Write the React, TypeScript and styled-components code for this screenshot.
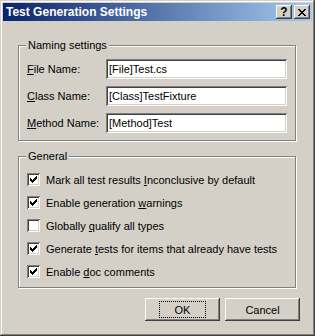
import React from "react";
import styled, { createGlobalStyle } from "styled-components";

const GlobalStyle = createGlobalStyle`
  html, body {
    margin: 0;
    padding: 0;
    background: #d4d0c8;
  }
  body {
    font-family: "Liberation Sans", Arial, sans-serif;
    font-size: 11px;
    color: #000;
  }
`;

const Window = styled.div`
  width: 315px;
  height: 336px;
  box-sizing: border-box;
  padding: 3px;
  background: #d4d0c8;
  box-shadow: inset -1px -1px #404040, inset 1px 1px #d4d0c8,
    inset -2px -2px #808080, inset 2px 2px #fff;
  display: flex;
  flex-direction: column;
`;

const TitleBar = styled.div`
  height: 18px;
  display: flex;
  align-items: center;
  padding: 0 2px;
  background: linear-gradient(to right, #0a246a, #a6caf0);
`;

const Title = styled.span`
  flex: 1;
  color: #fff;
  font-weight: bold;
  font-size: 12px;
  padding-left: 1px;
  white-space: nowrap;
`;

const CaptionButton = styled.div<{ $gap?: number }>`
  width: 16px;
  height: 14px;
  margin-left: ${(p) => p.$gap ?? 0}px;
  box-sizing: border-box;
  background: #d4d0c8;
  box-shadow: inset -1px -1px #404040, inset 1px 1px #fff,
    inset -2px -2px #808080;
  display: flex;
  align-items: center;
  justify-content: center;
  font-weight: bold;
  font-size: 12px;
  line-height: 14px;
`;

const Body = styled.div`
  flex: 1;
  display: flex;
  flex-direction: column;
  padding: 24px 12px 0 15px;
`;

const Group = styled.div<{ $top: number }>`
  position: relative;
  margin-top: ${(p) => p.$top}px;
  margin-right: 4px;
  border: 1px solid #808080;
  box-shadow: 1px 1px 0 #fff, inset 1px 1px 0 #fff;
`;

const Legend = styled.span`
  position: absolute;
  top: -7px;
  left: 7px;
  padding: 0 2px;
  line-height: 13px;
  background: #d4d0c8;
`;

const FieldGrid = styled.div`
  display: grid;
  grid-template-columns: 79px 1fr;
  row-gap: 7px;
  align-items: center;
  padding: 13px 8px 7px 8px;
`;

const Label = styled.label`
  white-space: nowrap;
`;

const TextBox = styled.input`
  height: 20px;
  box-sizing: border-box;
  border: none;
  outline: none;
  margin: 0;
  padding: 0 2px 0 3px;
  background: #fff;
  font-family: "Liberation Sans", Arial, sans-serif;
  font-size: 11px;
  color: #000;
  box-shadow: inset 1px 1px #808080, inset -1px -1px #fff,
    inset 2px 2px #404040, inset -2px -2px #d4d0c8;
`;

const CheckList = styled.div`
  display: flex;
  flex-direction: column;
  padding: 11px 8px 4px 8px;
`;

const CheckRow = styled.label`
  height: 23px;
  display: flex;
  align-items: center;
  gap: 6px;
  white-space: nowrap;
`;

const Box = styled.span`
  width: 13px;
  height: 13px;
  box-sizing: border-box;
  flex: none;
  background: #fff;
  box-shadow: inset 1px 1px #808080, inset -1px -1px #fff,
    inset 2px 2px #404040, inset -2px -2px #d4d0c8;
  display: flex;
  padding: 3px;
`;

const ButtonRow = styled.div`
  display: flex;
  justify-content: flex-end;
  gap: 5px;
  margin-top: 10px;
`;

const Button = styled.button`
  width: 75px;
  height: 23px;
  border: none;
  margin: 0;
  padding: 0;
  background: #d4d0c8;
  font-family: "Liberation Sans", Arial, sans-serif;
  font-size: 11px;
  color: #000;
  display: flex;
  align-items: center;
  justify-content: center;
  box-shadow: inset -1px -1px #404040, inset 1px 1px #fff,
    inset -2px -2px #808080, inset 2px 2px #d4d0c8;
`;

const Focus = styled.span`
  width: 47px;
  height: 17px;
  box-sizing: border-box;
  border: 1px dotted #000;
  display: flex;
  align-items: center;
  justify-content: center;
`;

const Check = () => (
  <svg width="7" height="7" viewBox="0 0 7 7" shapeRendering="crispEdges">
    <rect x="6" y="0" width="1" height="1" />
    <rect x="5" y="1" width="2" height="1" />
    <rect x="0" y="2" width="1" height="1" />
    <rect x="4" y="2" width="3" height="1" />
    <rect x="0" y="3" width="2" height="1" />
    <rect x="3" y="3" width="3" height="1" />
    <rect x="0" y="4" width="5" height="1" />
    <rect x="1" y="5" width="3" height="1" />
    <rect x="2" y="6" width="1" height="1" />
  </svg>
);

const CloseGlyph = () => (
  <svg width="8" height="7" viewBox="0 0 8 7" shapeRendering="crispEdges">
    <rect x="0" y="0" width="2" height="1" />
    <rect x="6" y="0" width="2" height="1" />
    <rect x="1" y="1" width="2" height="1" />
    <rect x="5" y="1" width="2" height="1" />
    <rect x="2" y="2" width="4" height="1" />
    <rect x="3" y="3" width="2" height="1" />
    <rect x="2" y="4" width="4" height="1" />
    <rect x="1" y="5" width="2" height="1" />
    <rect x="5" y="5" width="2" height="1" />
    <rect x="0" y="6" width="2" height="1" />
    <rect x="6" y="6" width="2" height="1" />
  </svg>
);

const fields = [
  { key: "F", rest: "ile Name:", value: "[File]Test.cs" },
  { key: "C", rest: "lass Name:", value: "[Class]TestFixture" },
  { key: "M", rest: "ethod Name:", value: "[Method]Test" },
];

const options = [
  { before: "Mark all test results ", key: "I", after: "nconclusive by default", on: true },
  { before: "Enable generation ", key: "w", after: "arnings", on: true },
  { before: "Globally ", key: "q", after: "ualify all types", on: false },
  { before: "Generate ", key: "t", after: "ests for items that already have tests", on: true },
  { before: "Enable ", key: "d", after: "oc comments", on: true },
];

export default function App() {
  return (
    <>
      <GlobalStyle />
      <Window>
        <TitleBar>
          <Title>Test Generation Settings</Title>
          <CaptionButton>?</CaptionButton>
          <CaptionButton $gap={2}>
            <CloseGlyph />
          </CaptionButton>
        </TitleBar>
        <Body>
          <Group $top={0}>
            <Legend>Naming settings</Legend>
            <FieldGrid>
              {fields.map((f) => (
                <React.Fragment key={f.value}>
                  <Label>
                    <u>{f.key}</u>
                    {f.rest}
                  </Label>
                  <TextBox defaultValue={f.value} />
                </React.Fragment>
              ))}
            </FieldGrid>
          </Group>
          <Group $top={15}>
            <Legend>General</Legend>
            <CheckList>
              {options.map((o) => (
                <CheckRow key={o.after}>
                  <Box>{o.on && <Check />}</Box>
                  <span>
                    {o.before}
                    <u>{o.key}</u>
                    {o.after}
                  </span>
                </CheckRow>
              ))}
            </CheckList>
          </Group>
          <ButtonRow>
            <Button>
              <Focus>OK</Focus>
            </Button>
            <Button>Cancel</Button>
          </ButtonRow>
        </Body>
      </Window>
    </>
  );
}
